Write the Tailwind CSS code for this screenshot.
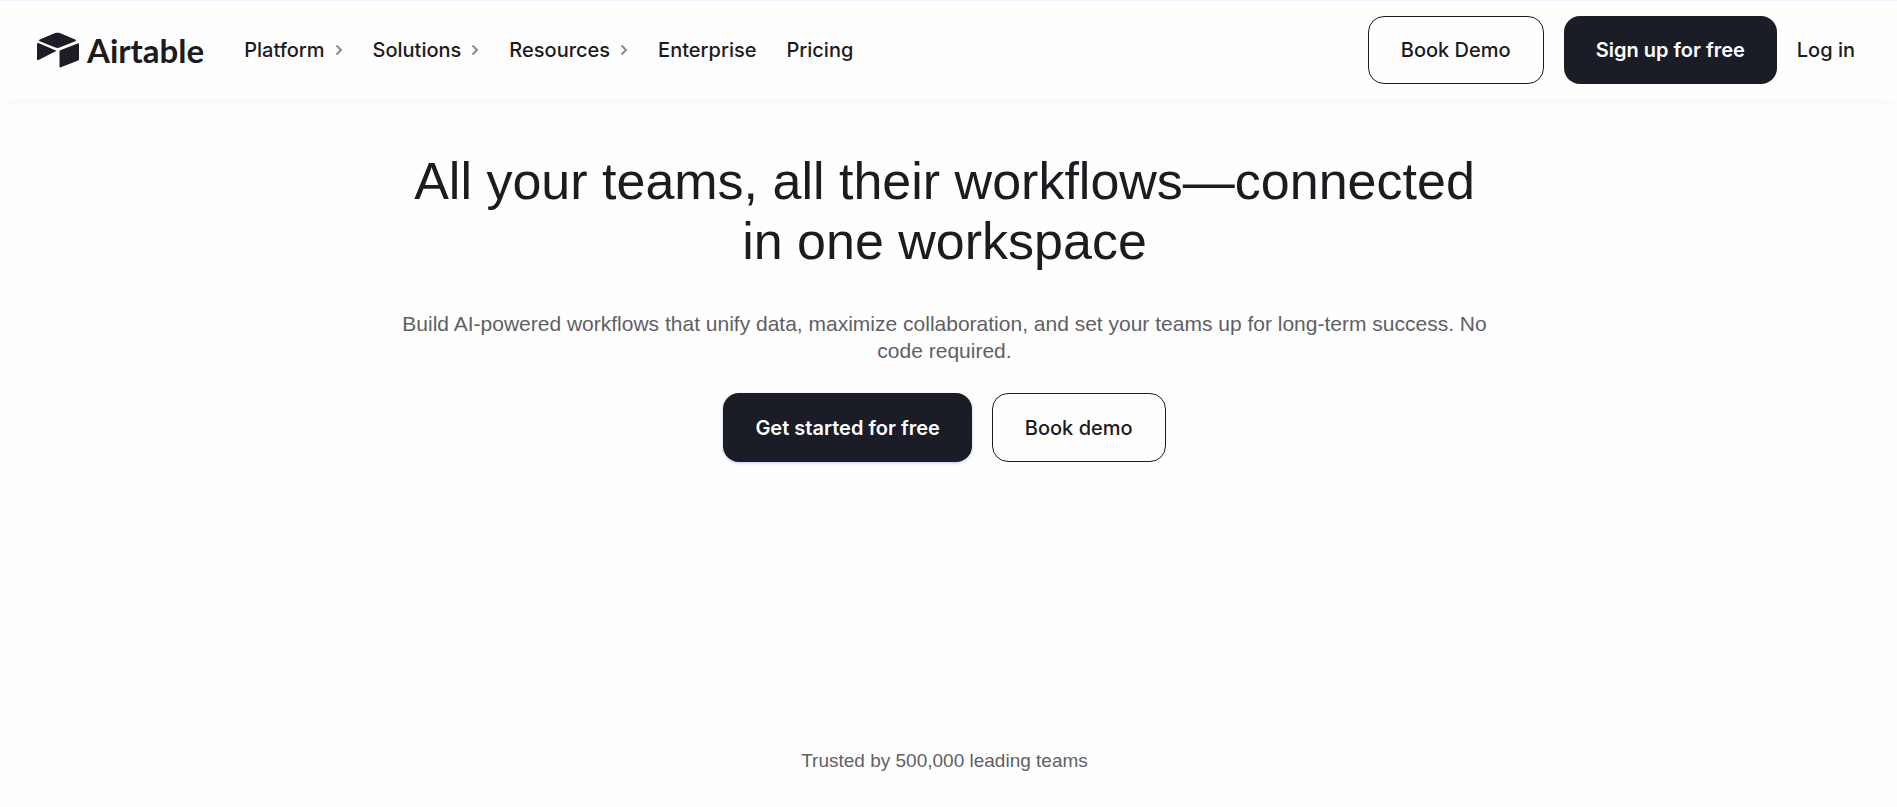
<!DOCTYPE html>
<html lang="en">
<head>
    <meta charset="UTF-8">
    <meta name="viewport" content="width=device-width, initial-scale=1.0">
    <title>Airtable</title>
    <script src="https://cdn.jsdelivr.net/npm/@tailwindcss/browser@4"></script>
</head>
<body class="min-h-screen bg-[#fefefe] font-['Inter','Liberation_Sans',sans-serif] text-[#1d1b20]">
    <header class="flex h-[99px] items-center border-t border-[#eef0fd] bg-[#fefefe] pl-9 pr-[42px] text-xl font-medium shadow-[0_6px_12px_rgba(150,50,255,0.03)]">
        <a href="#" class="flex items-center gap-[7px]" aria-label="Airtable home">
            <svg class="h-9 w-[44px]" viewBox="0 0 44 36" fill="#1c1d27" aria-hidden="true">
                <path d="M19.2 1.1 3.7 7.5c-.9.4-.9 1.4 0 1.8l15.600 6.200c1.4.5 2.9.5 4.3 0l15.600-6.200c.9-.4.9-1.400 0-1.800L23.700 1.100c-1.400-.6-3.100-.6-4.500 0z"/>
                <path d="M23.500 19.200v15.200c0 .8.700 1.200 1.400.9l17.300-6.700c.5-.2.800-.6.800-1V12.300c0-.7-.7-1.200-1.400-.9l-17.300 6.800c-.5.200-.8.600-.8 1z"/>
                <path d="M19.800 18.400 3 11.200c-.9-.4-2 .1-2 1v15c0 .7.800 1.100 1.500.8l17.200-8.700c.4-.2.400-.7.100-.9z"/>
            </svg>
            <span class="font-['Lato',sans-serif] text-[33px] font-bold leading-9">Airtable</span>
        </a>

        <nav class="ml-10 flex items-center gap-[30px]">
            <button class="flex items-center gap-2.5">
                Platform
                <svg class="h-3 w-2" viewBox="0 0 8 12" fill="none" stroke="#8b8a8f" stroke-width="2"><path d="M1.500 1.500 6 6 1.500 10.500"/></svg>
            </button>
            <button class="flex items-center gap-2.5">
                Solutions
                <svg class="h-3 w-2" viewBox="0 0 8 12" fill="none" stroke="#8b8a8f" stroke-width="2"><path d="M1.500 1.500 6 6 1.500 10.500"/></svg>
            </button>
            <button class="flex items-center gap-2.5">
                Resources
                <svg class="h-3 w-2" viewBox="0 0 8 12" fill="none" stroke="#8b8a8f" stroke-width="2"><path d="M1.500 1.500 6 6 1.500 10.500"/></svg>
            </button>
            <a href="#">Enterprise</a>
            <a href="#">Pricing</a>
        </nav>

        <div class="ml-auto flex items-center gap-5">
            <button class="h-[68px] rounded-2xl border border-[#1d1b20] px-8">Book Demo</button>
            <button class="h-[68px] rounded-2xl bg-[#1a1c26] px-8 font-semibold text-white">Sign up for free</button>
            <a href="#">Log in</a>
        </div>
    </header>

    <main class="flex flex-col items-center pr-2 pt-[52px] text-center">
        <h1 class="max-w-[1120px] font-['Liberation_Sans',sans-serif] text-[52px] leading-[60px]">All your teams, all their workflows—connected<br>in one workspace</h1>
        <p class="mt-[39px] max-w-[1120px] font-['Liberation_Sans',sans-serif] text-[21px] leading-[27px] text-[#615f65]">Build AI-powered workflows that unify data, maximize collaboration, and set your teams up for long-term success. No code required.</p>
        <div class="mt-[29px] flex gap-5 text-xl">
            <button class="h-[69px] rounded-2xl bg-[#1a1c26] px-8 font-semibold text-white shadow-[0_1px_3px_rgba(45,60,200,0.3)]">Get started for free</button>
            <button class="h-[69px] rounded-2xl border border-[#1d1b20] px-8 font-medium">Book demo</button>
        </div>
        <p class="mt-[285px] font-['Liberation_Sans',sans-serif] text-[19px] leading-7 text-[#615f65]">Trusted by 500,000 leading teams</p>
    </main>
</body>
</html>
